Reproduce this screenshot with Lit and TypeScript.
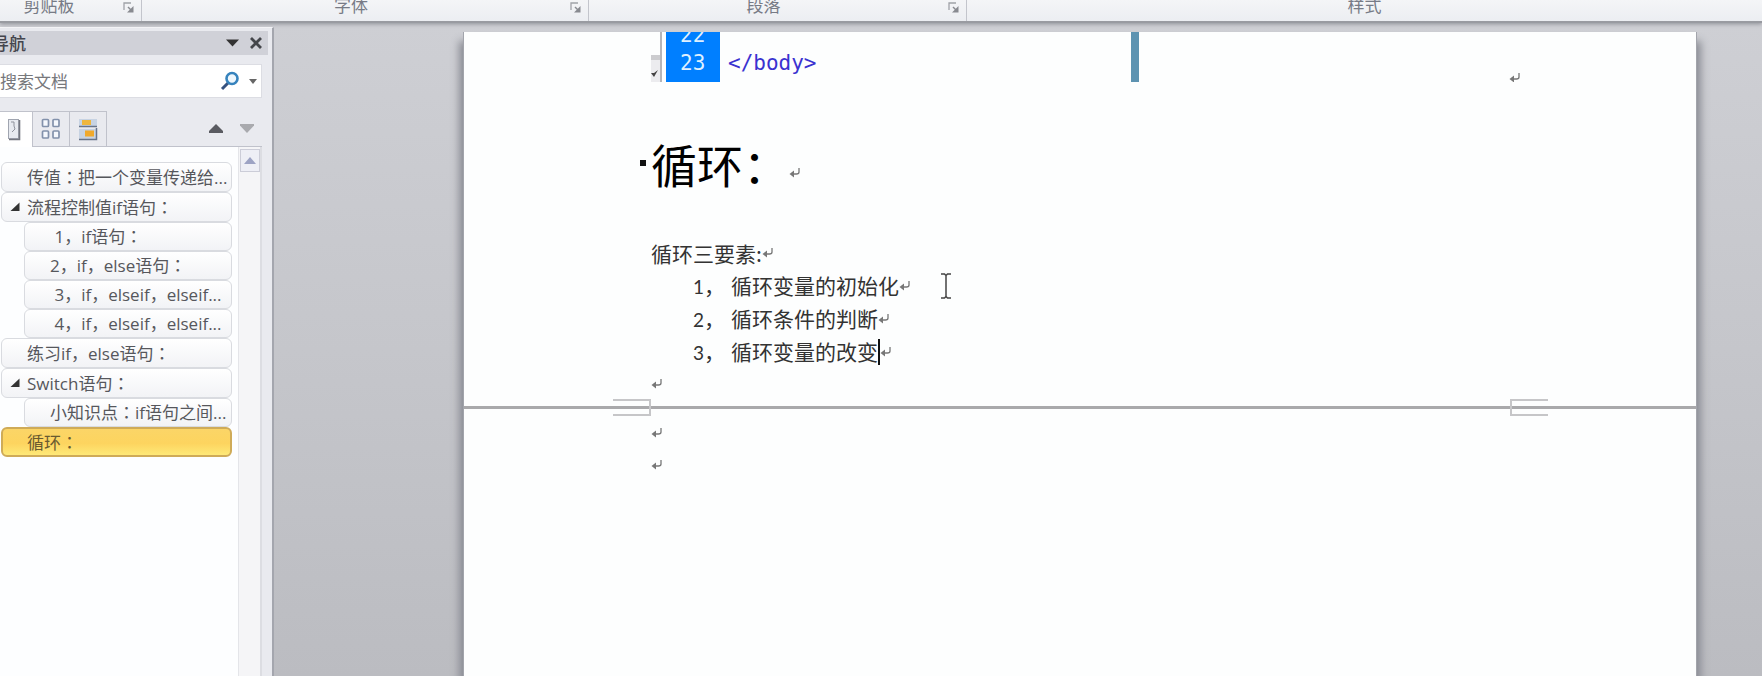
import { LitElement, html, css, svg } from "lit";
import { customElement, property } from "lit/decorators.js";

interface NavItem {
  text: string;
  child?: boolean;
  open?: boolean;
  current?: boolean;
}

const NAV: NavItem[] = [
  { text: "传值：把一个变量传递给..." },
  { text: "流程控制值if语句：", open: true },
  { text: " 1，if语句：", child: true },
  { text: "2，if，else语句：", child: true },
  { text: " 3，if，elseif，elseif...", child: true },
  { text: " 4，if，elseif，elseif...", child: true },
  { text: "练习if，else语句：" },
  { text: "Switch语句：", open: true },
  { text: "小知识点：if语句之间...", child: true },
  { text: "循环：", current: true },
];

const GROUPS = [
  { name: "clipboard", label: "剪贴板", launcher: true },
  { name: "font", label: "字体", launcher: true },
  { name: "paragraph", label: "段落", launcher: true },
  { name: "styles", label: "样式", launcher: false },
];

const STEPS = ["循环变量的初始化", "循环条件的判断", "循环变量的改变"];

@customElement("return-mark")
export class ReturnMark extends LitElement {
  static styles = css`
    :host { display: block; flex: none; width: 12px; height: 12px; color: #777; }
    svg { display: block; }
  `;
  render() {
    return html`<svg width="12" height="12" viewBox="0 0 12 12" aria-hidden="true">
      <path d="M10 1V5Q10 7 7.500 7H3" fill="none" stroke="currentColor" stroke-width="1.300" />
      <path d="M0.500 7L5 3.500V10.500Z" fill="currentColor" />
    </svg>`;
  }
}

@customElement("ribbon-strip")
export class RibbonStrip extends LitElement {
  static styles = css`
    :host {
      display: flex;
      height: 21px;
      overflow: hidden;
      background: linear-gradient(#f4f5f7, #eceef2);
      border-bottom: 2px solid #999ba1;
      box-shadow: 0 1px 4px #8e9097;
      font: 17px/20px "Noto Sans CJK SC", sans-serif;
      color: #777b86;
      position: relative;
    }
    .group { display: flex; align-items: flex-start; box-sizing: border-box; border-right: 1px solid #c3c5cc; flex: none; }
    .clipboard { width: 157px; margin-left: -15px; }
    .font { width: 447px; }
    .paragraph { width: 378px; }
    .styles { flex: 1; border: 0; }
    .label { flex: 1; text-align: center; margin-top: -5px; }
    .launcher { width: 28px; height: 16px; padding: 0 0 0 10px; border: 0; background: none; text-align: left; line-height: 0; }
  `;
  render() {
    return GROUPS.map(
      (g) => html`<div class="group ${g.name}">
        <span class="label">${g.label}</span>
        ${g.launcher
          ? html`<button class="launcher" aria-label=${g.label}>
              <svg width="12" height="12" viewBox="0 0 12 12">
                <path d="M1 8V1H8" fill="none" stroke="#a0a2a8" stroke-width="1.300" />
                <path d="M5 5L9 9" stroke="#888a90" stroke-width="1.500" />
                <path d="M10.500 4V10.500H4Z" fill="#888a90" />
              </svg>
            </button>`
          : null}
      </div>`
    );
  }
}

@customElement("nav-pane")
export class NavPane extends LitElement {
  static styles = css`
    :host {
      display: flex;
      flex-direction: column;
      box-sizing: border-box;
      width: 274px;
      flex: none;
      padding: 3px 4px 0 0;
      background: #e9eaef;
      border-top: 1px solid #f8f8fa;
      border-right: 2px solid #a4a6ae;
      font: 17px/24px "Open Sans", "Noto Sans CJK SC", sans-serif;
      color: #55565c;
    }
    button { border: 0; padding: 0; margin: 0; background: none; font: inherit; color: inherit; display: flex; align-items: center; justify-content: center; }
    .title { display: flex; align-items: center; height: 24px; background: #d0d1d8; }
    h2 { margin: 0 auto 0 -8px; font: 500 17px/24px "Noto Sans CJK SC", sans-serif; color: #44454d; }
    .title button { width: 24px; height: 24px; }
    .search { display: flex; align-items: center; height: 34px; box-sizing: border-box; margin: 9px 6px 13px 0; background: #fff; border: 1px solid #dcdde3; border-left: 0; }
    input { flex: 1; min-width: 0; border: 0; padding: 0; background: none; font: 17px/24px "Noto Sans CJK SC", sans-serif; outline: 0; }
    input::placeholder { color: #77787c; opacity: 1; }
    .search button { width: 20px; height: 24px; }
    .search .more { width: 16px; margin-left: 5px; }
    .tabs { display: flex; margin-right: 6px; height: 36px; box-sizing: border-box; border-bottom: 1px solid #c0c2cb; }
    .tab { width: 37px; box-sizing: border-box; border: 1px solid #c0c2cb; border-width: 1px 1px 0 0; }
    .tab.on { width: 33px; background: #fff; height: 36px; padding-right: 4px; }
    .jump { width: 31px; }
    .spring { flex: 1; }
    .body { display: flex; flex: 1; margin-right: 6px; background: #fdfeff; min-height: 0; }
    ul { list-style: none; margin: 0; padding: 15px 6px 0 1px; flex: 1; min-width: 0; }
    .item { display: flex; height: 30px; }
    .item.child { height: 29px; padding-left: 23px; }
    .item a {
      flex: 1; display: flex; align-items: center; box-sizing: border-box; min-width: 0; padding-left: 8px;
      border: 1px solid #d9dbe0; border-radius: 6px; background: linear-gradient(#fff, #f2f3f6);
      color: #56575c; text-decoration: none; white-space: pre; overflow: hidden;
    }
    .item.child a { padding-left: 25px; }
    .item.current a { background: linear-gradient(#fbd567, #fdd45f 55%, #fee978); border: 2px solid #cfab58; padding-left: 7px; color: #6a5a30; }
    .twist { width: 17px; flex: none; line-height: 0; }
    .colon { font-family: "Noto Sans CJK JP", sans-serif; }
    .scroll { width: 24px; background: #f5f5f7; border-left: 1px solid #e4e5e9; padding-top: 2px; display: flex; justify-content: center; box-sizing: border-box; border-right: 2px solid #dcdde2; }
    .scroll button { width: 20px; height: 23px; border: 1px solid #cccdd8; background: #eeeff6; }
  `;

  private label(text: string) {
    return text.split("：").map((part, i) => (i ? html`<span class="colon">：</span>${part}` : part));
  }

  render() {
    return html`
      <div class="title">
        <h2>导航</h2>
        <button aria-label="选项"><svg width="13" height="8" viewBox="0 0 13 8"><path d="M0 0.500H13L6.500 7.500Z" fill="#333" /></svg></button>
        <button aria-label="关闭"><svg width="14" height="14" viewBox="0 0 14 14"><path d="M2 2L12 12M12 2L2 12" stroke="#44464b" stroke-width="2.800" /></svg></button>
      </div>
      <div class="search">
        <input type="text" aria-label="搜索文档" placeholder="搜索文档" />
        <button aria-label="搜索"><svg width="20" height="20" viewBox="0 0 20 20">
          <path d="M2 18L8 12" stroke="#36527f" stroke-width="3" />
          <circle cx="12" cy="7.500" r="5.500" fill="#eef7fd" stroke="#3683bd" stroke-width="2.600" />
        </svg></button>
        <button class="more" aria-label="更多"><svg width="8" height="5" viewBox="0 0 8 5"><path d="M0 0H8L4 5Z" fill="#666" /></svg></button>
      </div>
      <div class="tabs">
        <button class="tab on" aria-label="标题"><svg width="14" height="23" viewBox="0 0 14 23">
          <rect x="1.500" y="1.500" width="10" height="19" fill="#e7eaf0" stroke="#a0a5b0" />
          <path d="M12.500 2V21.500H2" fill="none" stroke="#73767f" stroke-width="1.600" />
          <path d="M4 4H7V8L8 11L5 14" fill="none" stroke="#8f939d" />
        </svg></button>
        <button class="tab" aria-label="页面"><svg width="20" height="22" viewBox="0 0 20 22" fill="#f5f8fd" stroke="#8291ab" stroke-width="1.700">
          <rect x="1.500" y="1.500" width="6" height="7" rx="1" /><rect x="12" y="1.500" width="6" height="7" rx="1" />
          <rect x="1.500" y="13" width="6" height="7" rx="1" /><rect x="12" y="13" width="6" height="7" rx="1" />
        </svg></button>
        <button class="tab" aria-label="结果"><svg width="20" height="23" viewBox="0 0 20 23">
          <rect x="1" y="1" width="18" height="7" fill="#c7d3e3" /><rect x="4" y="2" width="9" height="5" fill="#eeb63d" />
          <path d="M1 8.500H19" stroke="#68748a" stroke-width="1.500" />
          <rect x="1" y="11" width="18" height="10" fill="#c7d3e3" /><rect x="7" y="12.500" width="9" height="6" fill="#f0a92c" />
          <path d="M1 21.500H18.500V10" fill="none" stroke="#68748a" stroke-width="1.500" />
        </svg></button>
        <span class="spring"></span>
        <button class="jump" aria-label="上一个"><svg width="14" height="9" viewBox="0 0 14 9"><path d="M0 9V7L7 0L14 7V9Z" fill="#5a5b61" /></svg></button>
        <button class="jump" aria-label="下一个"><svg width="14" height="9" viewBox="0 0 14 9"><path d="M0 0V1.500L7 9L14 1.500V0Z" fill="#a9aaae" /></svg></button>
      </div>
      <div class="body">
        <ul>
          ${NAV.map(
            (n) => html`<li class="item ${n.child ? "child" : ""} ${n.current ? "current" : ""}">
              <a href="#">${n.child
                ? null
                : html`<span class="twist">${n.open
                    ? html`<svg width="10" height="10" viewBox="0 0 10 10"><path d="M9.500 0.500V9H0.500Z" fill="#333" /></svg>`
                    : null}</span>`}<span>${this.label(n.text)}</span></a>
            </li>`
          )}
        </ul>
        <div class="scroll"><button aria-label="向上滚动"><svg width="12" height="7" viewBox="0 0 12 7"><path d="M0 7L6 0L12 7Z" fill="#9da3c4" /></svg></button></div>
      </div>
    `;
  }
}

@customElement("page-break")
export class PageBreak extends LitElement {
  static styles = css`
    :host { display: grid; grid-template-columns: 149px 38px 1fr 38px 148px; height: 17px; background: linear-gradient(#a9a9ab, #a9a9ab) center / 100% 3px no-repeat; }
    .corner { border: 2px solid #c6c6c8; grid-row: 1; }
    .left { grid-column: 2; border-left: 0; }
    .right { grid-column: 4; border-right: 0; }
  `;
  render() {
    return html`<span class="corner left"></span><span class="corner right"></span>`;
  }
}

@customElement("document-page")
export class DocumentPage extends LitElement {
  @property({ type: Number }) caretLine = 2;

  static styles = css`
    :host {
      display: block;
      background: #fdfefe;
      box-shadow: -1px 0 0 #a2a4ab, 1px 0 0 #a2a4ab, 6px 8px 8px -1px #8b8d95, -6px 8px 8px -1px #8b8d95;
      font: 21px/33px "Noto Sans CJK SC", sans-serif;
      color: #333;
    }
    .shot { display: flex; height: 50px; margin: 0 175px 0 187px; overflow: hidden; }
    .rail { width: 11px; box-sizing: border-box; border-right: 2px solid #b5b5b9; display: flex; flex-direction: column; justify-content: flex-end; }
    .thumb { height: 27px; box-sizing: border-box; background: #ececef; border-top: 5px solid #cccccf; display: flex; align-items: flex-end; padding-bottom: 4px; }
    pre { margin: 0; font: 21px/28px "DejaVu Sans Mono", monospace; }
    .numbers { width: 54px; margin-left: 4px; background: #007fff; color: #dff0ff; }
    .numbers pre { margin: -11px 0 0 14px; }
    .code { width: 411px; color: #3a32d0; }
    .code pre { margin: -11px 0 0 8px; }
    .bar { width: 8px; background: #5d93b1; }
    .shot return-mark { margin: 40px 0 0 auto; }
    h1 { margin: 48px 0 0 176px; font: 400 46px/66px "Noto Sans CJK SC", sans-serif; color: #000; display: flex; align-items: center; }
    .dot { width: 6px; height: 6px; background: #111; margin-right: 5px; }
    h1 return-mark { margin-top: 20px; }
    .text { padding: 41px 0 0 187px; }
    p { margin: 0; height: 32px; display: flex; align-items: center; }
    ol { list-style: none; margin: 0; padding: 0 0 0 42px; }
    .row { display: flex; align-items: center; height: 33px; }
    .num { width: 38px; flex: none; }
    .digit { font: 19px/20px Lato, sans-serif; }
    .caret { width: 2px; height: 26px; background: #111; }
    .beam { margin-left: 29px; }
    p.blank { height: 31px; }
    .next { padding: 1px 0 0 187px; }
  `;

  render() {
    return html`
      <div class="shot">
        <div class="rail"><div class="thumb"><svg width="8" height="9" viewBox="0 0 8 9"><path d="M0 4L3 8L7 1L3 4Z" fill="#444" /></svg></div></div>
        <div class="numbers"><pre>22
23</pre></div>
        <div class="code"><pre>

&lt;/body&gt;
&lt;/html&gt;</pre></div>
        <div class="bar"></div>
        <return-mark></return-mark>
      </div>
      <h1><span class="dot"></span>循环：<return-mark></return-mark></h1>
      <div class="text">
        <p>循环三要素:<return-mark></return-mark></p>
        <ol>
          ${STEPS.map(
            (s, i) => html`<li class="row">
              <span class="num"><span class="digit">${i + 1}</span>，</span><span>${s}</span>
              ${i === this.caretLine ? html`<span class="caret"></span>` : null}<return-mark></return-mark>
              ${i === 0
                ? html`<svg class="beam" width="12" height="26" viewBox="0 0 12 26"><path d="M1 1H4.500L6 2.500L7.500 1H11M6 2.500V23.500M1 25H4.500L6 23.500L7.500 25H11" fill="none" stroke="#444" stroke-width="1.500" /></svg>`
                : null}
            </li>`
          )}
        </ol>
        <p class="blank"><return-mark></return-mark></p>
      </div>
      <page-break></page-break>
      <div class="next">
        <p><return-mark></return-mark></p>
        <p><return-mark></return-mark></p>
      </div>
    `;
  }
}

@customElement("app-root")
export class AppRoot extends LitElement {
  static styles = css`
    :host { display: flex; flex-direction: column; height: 100vh; overflow: hidden; background: #c3c4ca; }
    ribbon-strip { flex: none; }
    .work { display: flex; flex: 1; min-height: 0; padding-top: 4px; background: linear-gradient(#cecfd4, #c5c6cb 50%, #bbbcc1); }
    .canvas { flex: 1; display: flex; padding: 5px 66px 0 190px; overflow: hidden; }
    document-page { flex: 1; }
  `;
  render() {
    return html`
      <ribbon-strip></ribbon-strip>
      <div class="work">
        <nav-pane></nav-pane>
        <main class="canvas"><document-page></document-page></main>
      </div>
    `;
  }
}
